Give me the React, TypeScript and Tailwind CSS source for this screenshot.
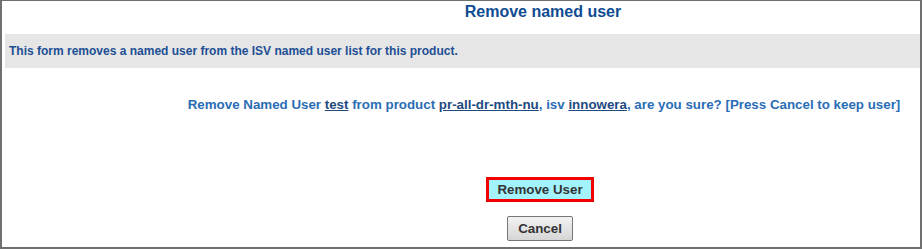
import React from "react";

const App = () => {
  return (
    <div
      className="box-border flex h-[249px] w-[922px] flex-col border-2 border-t border-[#707070] bg-white"
      style={{ fontFamily: '"Liberation Sans", Arial, sans-serif' }}
    >
      <div className="flex h-[33px] items-start justify-center pl-[164px] pt-[1px]">
        <h1 className="text-[16px] font-bold leading-[20px] text-[#0f4c91]">
          Remove named user
        </h1>
      </div>
      <div className="ml-[3px] flex h-[34px] items-center bg-[#e6e6e6] pl-[4px]">
        <p className="text-[12px] font-bold text-[#1d4f95]">
          This form removes a named user from the ISV named user list for this product.
        </p>
      </div>
      <div className="flex h-[76px] items-center justify-center pl-[166px] pb-[2px]">
        <p className="text-[13.33px] font-bold text-[#2b6db5]">
          Remove Named User <span className="text-[#1e4a80] underline">test</span> from product{" "}
          <span className="text-[#1e4a80] underline">pr-all-dr-mth-nu</span>, isv{" "}
          <span className="text-[#1e4a80] underline">innowera</span>, are you sure? [Press Cancel to keep user]
        </p>
      </div>
      <div className="flex flex-col items-center gap-[14px] pl-[158px] pt-[33px]">
        <button className="box-border h-[25px] w-[108px] border-[3px] border-[#f20000] bg-[#a3f3ff] text-[13.33px] font-bold text-[#333333]">
          Remove User
        </button>
        <button className="box-border h-[25px] w-[66px] rounded-[2px] border border-[#767676] bg-gradient-to-b from-[#f2f2f2] to-[#d6d6d6] text-[13.33px] font-bold text-[#333333]">
          Cancel
        </button>
      </div>
    </div>
  );
};

export default App;
